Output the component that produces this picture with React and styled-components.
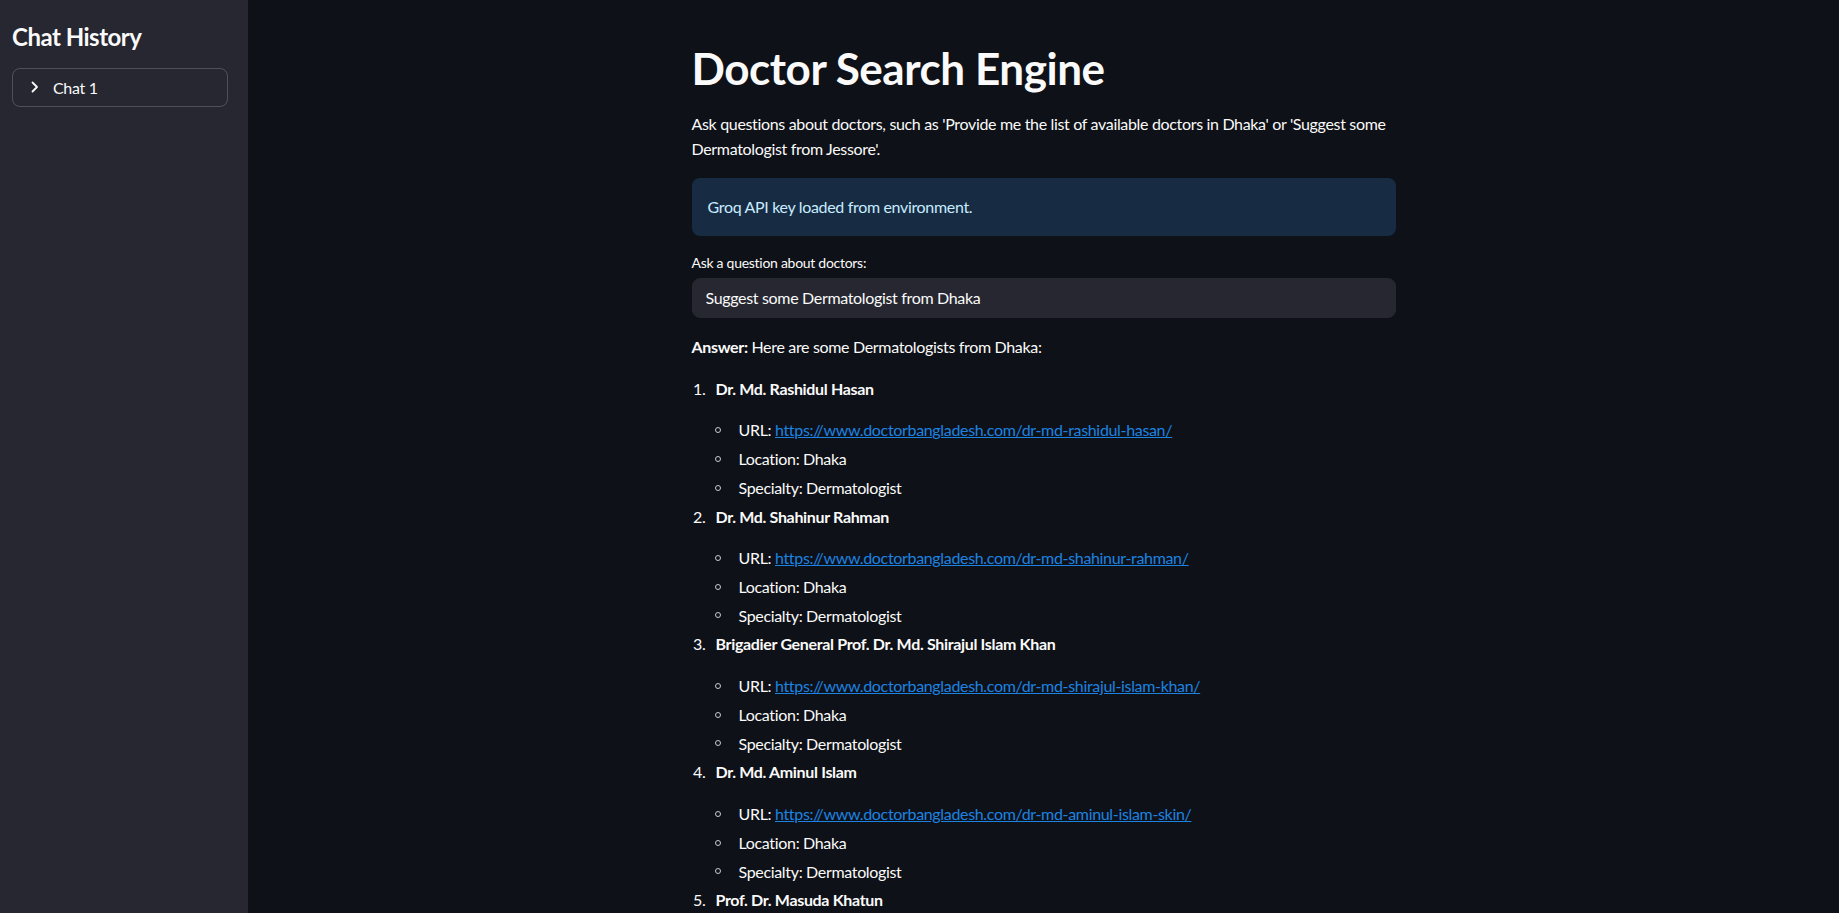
import React from "react";
import styled, { createGlobalStyle } from "styled-components";

const GlobalStyle = createGlobalStyle`
  html, body {
    margin: 0;
    padding: 0;
    background: #0e1117;
    color: #fafafa;
    font-family: Lato, "Noto Sans", sans-serif;
  }
  * { box-sizing: border-box; }
`;

const Shell = styled.div`
  display: flex;
  height: 100vh;
  overflow: hidden;
  background: #0e1117;
`;

const Sidebar = styled.aside`
  flex: 0 0 248px;
  width: 248px;
  height: 100%;
  background: #262730;
  padding: 23px 20px 0 12px;
  display: flex;
  flex-direction: column;
  gap: 16px;
`;

const SideHeading = styled.h2`
  margin: 0;
  font-size: 24px;
  line-height: 1.2;
  font-weight: 700;
  letter-spacing: -0.5px;
  color: #fafafa;
`;

const Expander = styled.div`
  height: 39px;
  flex-shrink: 0;
  border: 1px solid rgba(250, 250, 250, 0.2);
  border-radius: 8px;
  display: flex;
  align-items: center;
  padding-left: 14px;
  gap: 10px;
  font-size: 16px;
  letter-spacing: -0.33px;
  color: #fafafa;
`;

const Chevron = styled.svg`
  width: 16px;
  height: 16px;
  flex: 0 0 16px;
`;

const Main = styled.main`
  flex: 1;
  height: 100%;
  overflow-y: auto;
  scrollbar-width: none;
  display: flex;
  justify-content: center;
  align-items: flex-start;
`;

const Column = styled.div`
  width: 704px;
  flex-shrink: 0;
  padding-top: 42px;
  display: flex;
  flex-direction: column;
  font-size: 16px;
  line-height: 1.6;
  letter-spacing: -0.33px;

  & > * {
    flex-shrink: 0;
  }
`;

const Title = styled.h1`
  margin: 0 0 16px;
  font-size: 44px;
  line-height: 1.2;
  font-weight: 700;
  letter-spacing: -0.45px;
  color: #fafafa;
`;

const Para = styled.p`
  margin: 0 0 16px;
`;

const InfoBox = styled.div`
  background: rgba(61, 157, 243, 0.2);
  color: rgb(199, 235, 255);
  border-radius: 8px;
  padding: 16px;
  margin-bottom: 16px;
`;

const Label = styled.label`
  font-size: 14px;
  line-height: 1.6;
  letter-spacing: -0.28px;
  margin-bottom: 4px;
`;

const Input = styled.input`
  display: block;
  height: 40px;
  width: 100%;
  background: #262730;
  border: 1px solid #262730;
  border-radius: 8px;
  padding: 0 13px;
  color: #fafafa;
  font-family: Lato, "Noto Sans", sans-serif;
  font-size: 16px;
  letter-spacing: -0.33px;
  outline: none;
  margin: 0 0 16px;
`;

const OrderedList = styled.ol`
  list-style: none;
  margin: 0;
  padding: 0;
  display: flex;
  flex-direction: column;
  gap: 3.2px;
`;

const Item = styled.li`
  display: flex;
  gap: 10px;
`;

const Num = styled.span`
  flex: 0 0 14px;
  text-align: right;
`;

const ItemBody = styled.div`
  flex: 1;
  display: flex;
  flex-direction: column;
`;

const ItemName = styled.strong`
  font-weight: 700;
  margin-bottom: 16px;
`;

const SubList = styled.ul`
  list-style: none;
  margin: 0 0 0 -1px;
  padding: 0;
  display: flex;
  flex-direction: column;
  gap: 3.2px;
`;

const SubItem = styled.li`
  display: flex;
  align-items: center;
  gap: 18px;
`;

const Circle = styled.span`
  width: 6px;
  height: 6px;
  flex: 0 0 6px;
  border: 1px solid #c9cacd;
  border-radius: 50%;
`;

const Link = styled.a`
  color: #1c83e1;
  text-decoration: underline;
`;

const doctors = [
  { name: "Dr. Md. Rashidul Hasan", slug: "dr-md-rashidul-hasan" },
  { name: "Dr. Md. Shahinur Rahman", slug: "dr-md-shahinur-rahman" },
  { name: "Brigadier General Prof. Dr. Md. Shirajul Islam Khan", slug: "dr-md-shirajul-islam-khan" },
  { name: "Dr. Md. Aminul Islam", slug: "dr-md-aminul-islam-skin" },
  { name: "Prof. Dr. Masuda Khatun", slug: "prof-dr-masuda-khatun" },
];

export default function App() {
  return (
    <Shell>
      <GlobalStyle />
      <Sidebar>
        <SideHeading>Chat History</SideHeading>
        <Expander>
          <Chevron viewBox="0 0 16 16" fill="none">
            <path d="M5.5 3.5 L10 8 L5.5 12.5" stroke="#fafafa" strokeWidth="1.8" strokeLinecap="round" strokeLinejoin="round" />
          </Chevron>
          <span>Chat 1</span>
        </Expander>
      </Sidebar>
      <Main>
        <Column>
          <Title>Doctor Search Engine</Title>
          <Para>
            Ask questions about doctors, such as 'Provide me the list of available doctors in Dhaka' or 'Suggest some
            Dermatologist from Jessore'.
          </Para>
          <InfoBox>Groq API key loaded from environment.</InfoBox>
          <Label>Ask a question about doctors:</Label>
          <Input defaultValue="Suggest some Dermatologist from Dhaka" />
          <Para>
            <strong>Answer:</strong> Here are some Dermatologists from Dhaka:
          </Para>
          <OrderedList>
            {doctors.map((d, i) => {
              const url = `https://www.doctorbangladesh.com/${d.slug}/`;
              return (
                <Item key={d.slug}>
                  <Num>{i + 1}.</Num>
                  <ItemBody>
                    <ItemName>{d.name}</ItemName>
                    <SubList>
                      <SubItem>
                        <Circle />
                        <span>
                          URL: <Link href={url}>{url}</Link>
                        </span>
                      </SubItem>
                      <SubItem>
                        <Circle />
                        <span>Location: Dhaka</span>
                      </SubItem>
                      <SubItem>
                        <Circle />
                        <span>Specialty: Dermatologist</span>
                      </SubItem>
                    </SubList>
                  </ItemBody>
                </Item>
              );
            })}
          </OrderedList>
        </Column>
      </Main>
    </Shell>
  );
}
